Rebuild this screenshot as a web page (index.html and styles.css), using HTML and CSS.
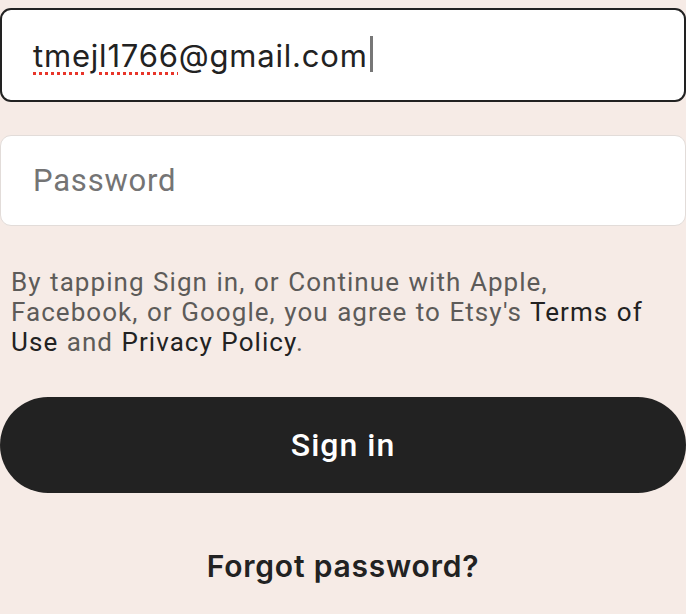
FILE: index.html
```html
<!DOCTYPE html>
<html>
<head>
<meta charset="utf-8">
<link rel="stylesheet" href="styles.css">
</head>
<body>
<main class="form">
  <div class="field field-active">
    <span class="value"><span class="misspelled">tmejl1766</span>@gmail.com</span><span class="caret"></span>
  </div>
  <div class="field field-empty">
    <span class="placeholder">Password</span>
  </div>
  <p class="legal">By tapping Sign in, or Continue with Apple, Facebook, or Google, you agree to Etsy's <span class="link">Terms of Use</span> and <span class="link">Privacy Policy</span>.</p>
  <button class="signin">Sign in</button>
  <div class="forgot">Forgot password?</div>
</main>
</body>
</html>
```
FILE: styles.css
```css
html, body {
  margin: 0;
  padding: 0;
  background: #f6ebe6;
  width: 686px;
  height: 614px;
  overflow: hidden;
}
.form {
  display: flex;
  flex-direction: column;
  padding-top: 8px;
}
.field {
  box-sizing: border-box;
  width: 686px;
  background: #fff;
  border-radius: 11px;
  display: flex;
  align-items: center;
}
.field-active {
  height: 94px;
  border: 2px solid #222;
  font-family: Inter, "Liberation Sans", sans-serif;
  font-size: 31px;
  color: #222;
  padding-left: 31px;
}
.value {
  letter-spacing: 0.8px;
}
.misspelled {
  text-decoration: underline dotted #e8352a;
  text-decoration-thickness: 3px;
  text-underline-offset: 5px;
}
.caret {
  display: inline-block;
  width: 3px;
  height: 36px;
  background: #777;
  margin-left: 2px;
  margin-top: -2px;
}
.field-empty {
  margin-top: 33px;
  height: 91px;
  border: 1.5px solid #e2dcd9;
  font-family: Roboto, sans-serif;
  font-size: 31px;
  letter-spacing: 0.8px;
  color: #747474;
  padding-left: 32px;
}
.legal {
  margin: 41px 0 0 11px;
  font-family: Roboto, sans-serif;
  font-size: 26px;
  letter-spacing: 1.05px;
  word-spacing: 1px;
  line-height: 30px;
  color: #5d5b59;
  width: 640px;
}
.link {
  color: #222;
}
.signin {
  margin-top: 40px;
  height: 96px;
  width: 686px;
  border: none;
  border-radius: 48px;
  background: #222;
  color: #fff;
  font-family: Roboto, sans-serif;
  font-weight: 500;
  font-size: 32px;
  letter-spacing: 1px;
  padding: 0;
}
.forgot {
  margin-top: 55px;
  text-align: center;
  font-family: Inter, sans-serif;
  font-weight: 600;
  font-size: 30px;
  letter-spacing: 0.8px;
  color: #222;
}
```
